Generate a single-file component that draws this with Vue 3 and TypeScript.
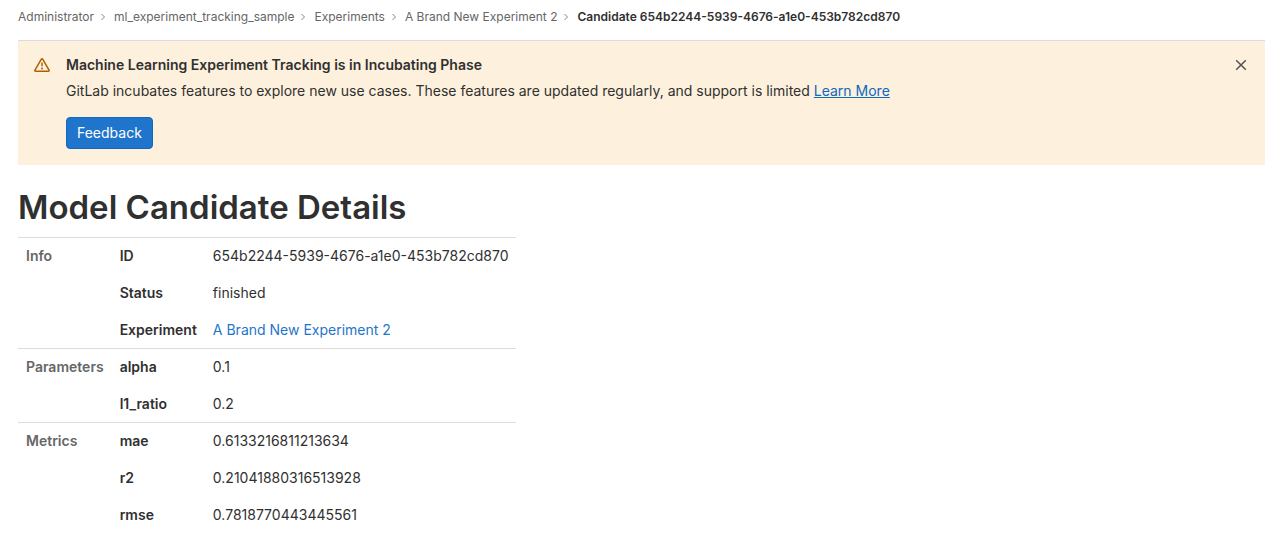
<script setup lang="ts">
interface Row { label: string; value: string; href?: string }
interface Section { title: string; rows: Row[] }

const ancestors: string[] = ['Administrator', 'ml_experiment_tracking_sample', 'Experiments', 'A Brand New Experiment 2']
const candidateId = '654b2244-5939-4676-a1e0-453b782cd870'

const sections: Section[] = [
  {
    title: 'Info',
    rows: [
      { label: 'ID', value: candidateId },
      { label: 'Status', value: 'finished' },
      { label: 'Experiment', value: 'A Brand New Experiment 2', href: '#experiment' },
    ],
  },
  {
    title: 'Parameters',
    rows: [
      { label: 'alpha', value: '0.1' },
      { label: 'l1_ratio', value: '0.2' },
    ],
  },
  {
    title: 'Metrics',
    rows: [
      { label: 'mae', value: '0.6133216811213634' },
      { label: 'r2', value: '0.21041880316513928' },
      { label: 'rmse', value: '0.7818770443445561' },
    ],
  },
]
</script>

<template>
  <div class="page">
    <nav class="crumbs" aria-label="Breadcrumbs">
      <ol>
        <li v-for="name in ancestors" :key="name">
          <a href="#">{{ name }}</a>
          <svg class="chevron" viewBox="0 0 8 8" aria-hidden="true"><path d="M2.5 1l3 3-3 3" /></svg>
        </li>
        <li><a class="current" href="#" aria-current="page">Candidate {{ candidateId }}</a></li>
      </ol>
    </nav>

    <section class="alert">
      <svg class="warning" viewBox="0 0 16 16" aria-hidden="true">
        <path class="outline" d="M7.35 2.1a.75.75 0 0 1 1.3 0l6.4 11.1a.75.75 0 0 1-.65 1.12H1.6a.75.75 0 0 1-.65-1.12z" />
        <path class="outline" d="M8 5.6v3.6" />
        <circle cx="8" cy="11.4" r="1" />
      </svg>
      <div class="alert-body">
        <h2>Machine Learning Experiment Tracking is in Incubating Phase</h2>
        <p>GitLab incubates features to explore new use cases. These features are updated regularly, and support is limited <a href="#learn-more">Learn More</a></p>
        <button class="feedback" type="button">Feedback</button>
      </div>
      <button class="close" type="button" aria-label="Dismiss">
        <svg viewBox="0 0 16 16" aria-hidden="true"><path d="M3.2 3.2l9.6 9.6M12.8 3.2l-9.6 9.6" /></svg>
      </button>
    </section>

    <h1>Model Candidate Details</h1>

    <table>
      <tbody v-for="section in sections" :key="section.title">
        <tr v-for="(row, i) in section.rows" :key="row.label">
          <th v-if="i === 0" class="group" scope="rowgroup" :rowspan="section.rows.length">{{ section.title }}</th>
          <th scope="row">{{ row.label }}</th>
          <td><a v-if="row.href" :href="row.href">{{ row.value }}</a><template v-else>{{ row.value }}</template></td>
        </tr>
      </tbody>
    </table>
  </div>
</template>

<style>
body { background: #fff; }
</style>

<style scoped>
.page {
  padding: 0 12px 0 18px;
  font: 14px/20px Inter, "Liberation Sans", sans-serif;
  color: #303030;
}
.crumbs {
  padding: 8px 0 14px;
  border-bottom: 1px solid #dcdcde;
  font-size: 12px;
  line-height: 18px;
}
.crumbs ol {
  display: flex;
  margin: 0;
  padding: 0;
  list-style: none;
}
.crumbs li { display: flex; align-items: center; }
.crumbs a { color: #666; text-decoration: none; }
.crumbs .current { color: #303030; font-weight: 600; }
.chevron {
  width: 8px;
  height: 8px;
  margin: 0 7px 0 5px;
  fill: none;
  stroke: #868686;
}
.alert {
  display: flex;
  align-items: flex-start;
  padding: 16px;
  background: #fdf1dd;
}
.warning {
  flex: none;
  width: 16px;
  height: 16px;
  margin-right: 16px;
  fill: #ab6100;
}
.warning .outline { fill: none; stroke: #ab6100; stroke-width: 1.5; }
.alert-body { flex: 1; }
h2 { margin: 0 0 6px; font-size: 14px; line-height: 16px; font-weight: 600; }
p { margin: 0; line-height: 24px; }
a { color: #1068bf; }
.feedback {
  height: 32px;
  margin-top: 14px;
  padding: 0 10px;
  border: 1px solid #1068bf;
  border-radius: 4px;
  background: #1f75cb;
  color: #fff;
  font: inherit;
}
.close {
  display: flex;
  padding: 0;
  border: 0;
  background: none;
}
.close svg { width: 16px; height: 16px; fill: none; stroke: #525252; stroke-width: 1.5; }
h1 {
  margin: 20px 0 8px;
  font-size: 33px;
  line-height: 44px;
  font-weight: 600;
}
table { border-spacing: 0; }
th, td {
  padding: 8px;
  line-height: 21px;
  text-align: left;
  vertical-align: top;
  font-weight: 400;
}
th { font-weight: 600; }
tr:first-child > * { box-shadow: inset 0 1px #dcdcdc; }
.group { color: #666; }
td a { color: #1f75cb; text-decoration: none; }
</style>
